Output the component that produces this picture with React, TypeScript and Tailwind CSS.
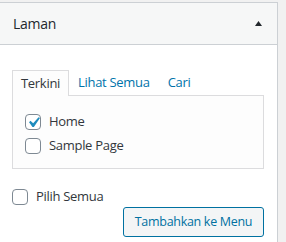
import React from "react";

function Box({ checked }: { checked?: boolean }) {
  return (
    <span className="relative inline-flex w-[16px] h-[16px] shrink-0 rounded-[4px] border border-[#7e8993] bg-white">
      {checked && (
        <svg viewBox="0 0 20 20" className="absolute left-[-3px] top-[-3px] w-[21px] h-[21px]">
          <path d="M14.83 4.89l1.34.94-5.81 8.38H9.02L5.78 9.67l1.34-1.25 2.57 2.4z" fill="#1e8cbe" />
        </svg>
      )}
    </span>
  );
}

export default function App() {
  return (
    <div
      className="w-[286px] h-[242px] bg-[#f1f1f1] pt-[2px] overflow-hidden text-[13px] text-[#32373c]"
      style={{ fontFamily: '"Open Sans", "Noto Sans", sans-serif' }}
    >
      <div className="w-[278px] h-[240px] bg-white border-t border-r border-[#ccd0d4]">
        <div className="h-[42px] bg-[#f6f7f7] border-b border-[#ccd0d4] flex items-center justify-between pl-[13px] pr-[15px]">
          <span className="text-[14px] text-[#23282d] tracking-[-0.3px]">Laman</span>
          <svg width="7" height="5" viewBox="0 0 7 5">
            <path d="M3.5 0L7 5H0z" fill="#23282d" />
          </svg>
        </div>
        <div className="px-[12px] pt-[25px]">
          <div className="flex items-end h-[25px] tracking-[-0.3px]">
            <div className="relative z-10 h-[26px] -mb-px border border-b-0 border-[#dcdcde] bg-[#fdfdfd] px-[8px] flex items-center text-[#32373c]">
              Terkini
            </div>
            <div className="h-[25px] flex items-center ml-[9px] text-[#0073aa]">Lihat Semua</div>
            <div className="h-[25px] flex items-center ml-[18px] text-[#0073aa]">Cari</div>
          </div>
          <div className="w-[252px] h-[74px] border border-[#dcdcde] bg-[#fdfdfd] pt-[18px] pl-[12px] flex flex-col gap-[8px]">
            <label className="flex items-center gap-[8px] h-[16px]">
              <Box checked />
              <span className="tracking-[-0.3px]">Home</span>
            </label>
            <label className="flex items-center gap-[8px] h-[16px]">
              <Box />
              <span className="tracking-[-0.3px]">Sample Page</span>
            </label>
          </div>
          <label className="flex items-center gap-[8px] h-[16px] mt-[20px]">
            <Box />
            <span className="tracking-[-0.3px]">Pilih Semua</span>
          </label>
          <div className="flex justify-end w-[252px] mt-[2px]">
            <button className="h-[30px] w-[141px] rounded-[3px] border border-[#0071a1] bg-[#f3f5f6] text-[#0071a1] text-[12.5px] tracking-[-0.3px]">
              Tambahkan ke Menu
            </button>
          </div>
        </div>
      </div>
    </div>
  );
}
